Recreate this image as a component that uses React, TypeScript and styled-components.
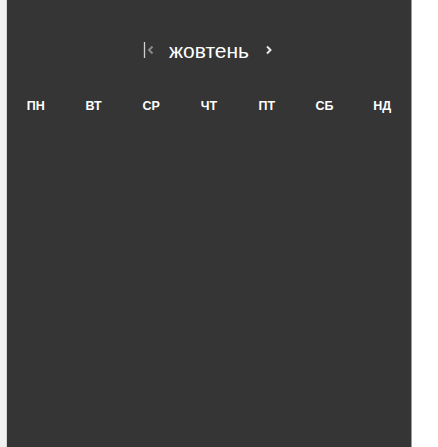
import React from "react";
import styled, { createGlobalStyle } from "styled-components";

const Global = createGlobalStyle`
  html, body { margin: 0; padding: 0; background: #ffffff; }
  body { font-family: "Liberation Sans", Arial, sans-serif; }
`;

const Page = styled.div`
  height: 447px;
  display: flex;
  background: #ffffff;
`;

const LeftEdge = styled.div`
  width: 6px;
  background: #f1f1f1;
  border-right: 1px solid #d4d4d4;
`;

const Panel = styled.div`
  width: 404px;
  height: 447px;
  background: #353535;
  border-right: 1px solid #9a9a9a;
  display: flex;
  flex-direction: column;
`;

const Header = styled.div`
  margin-top: 36px;
  height: 28px;
  display: flex;
  align-items: center;
  justify-content: center;
  color: #ffffff;
`;

const NavButton = styled.button`
  background: none;
  border: none;
  padding: 0;
  width: 28px;
  height: 28px;
  display: flex;
  align-items: center;
  justify-content: center;
  cursor: pointer;
`;

const Title = styled.div`
  font-size: 21px;
  color: #ffffff;
  padding: 0 6px;
  line-height: 28px;
  margin-top: 2px;
`;

const Weekdays = styled.div`
  margin-top: 35px;
  display: grid;
  grid-template-columns: repeat(7, 1fr);
`;

const Weekday = styled.div`
  text-align: center;
  font-size: 12.5px;
  font-weight: 700;
  color: #ffffff;
  line-height: 14px;
`;

const days = ["ПН", "ВТ", "СР", "ЧТ", "ПТ", "СБ", "НД"];

export default function App() {
  return (
    <>
      <Global />
      <Page>
        <LeftEdge />
        <Panel>
          <Header>
            <NavButton aria-label="попередній">
              <svg width="18" height="18" viewBox="0 0 18 18">
                <line x1="4.5" y1="1" x2="4.5" y2="17" stroke="#cfcfcf" strokeWidth="1.3" />
                <polyline points="12.5,5.5 9,9 12.5,12.5" fill="none" stroke="#8a8a8a" strokeWidth="2" />
              </svg>
            </NavButton>
            <Title>жовтень</Title>
            <NavButton aria-label="наступний">
              <svg width="18" height="18" viewBox="0 0 18 18">
                <polyline points="7,5.5 10.5,9 7,12.5" fill="none" stroke="#e8e8e8" strokeWidth="2" />
              </svg>
            </NavButton>
          </Header>
          <Weekdays>
            {days.map((d) => (
              <Weekday key={d}>{d}</Weekday>
            ))}
          </Weekdays>
        </Panel>
      </Page>
    </>
  );
}
